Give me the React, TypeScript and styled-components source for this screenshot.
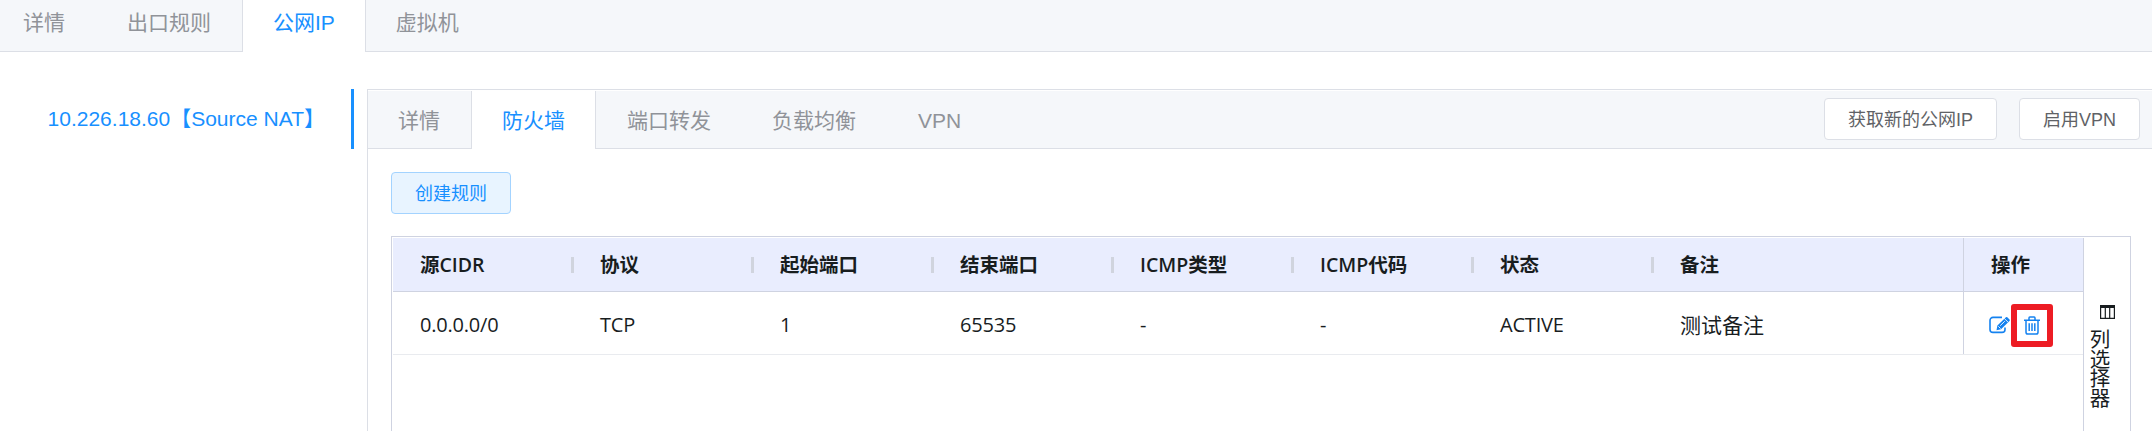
import React from 'react';
import styled, { createGlobalStyle, css } from 'styled-components';

const Global = createGlobalStyle`
  *, *::before, *::after { box-sizing: border-box; }
  body { margin: 0; background: #fff; overflow: hidden; }
`;

const uiFont = '"Liberation Sans", "Noto Sans CJK SC", sans-serif';
const gridFont = '"Open Sans", "Noto Sans", "Noto Sans CJK SC", sans-serif';

const Page = styled.div`
  width: 100%;
  height: 431px;
  overflow: hidden;
  display: flex;
  flex-direction: column;
  font-family: ${uiFont};
`;

const TabBar = styled.div<{ $h: number }>`
  height: ${p => p.$h}px;
  flex: none;
  display: flex;
  align-items: stretch;
  background: #f5f7fa;
  border-bottom: 1px solid #dcdfe6;
`;

const Tab = styled.div<{ $active?: boolean; $left?: number; $raised?: boolean }>`
  display: flex;
  align-items: center;
  font-size: 21px;
  line-height: 30px;
  white-space: nowrap;
  color: #909399;
  padding: ${p => (p.$raised ? '0 30px 6px' : '2px 30px 0')};
  padding-left: ${p => p.$left ?? 30}px;
  border: solid transparent;
  border-width: 0 1px;
  ${p => p.$active && css`
    color: #1890ff;
    background: #fff;
    border-color: #dcdfe6;
    margin-bottom: -1px;
  `}
`;

const Body = styled.div`
  flex: 1;
  display: flex;
  padding-top: 37px;
`;

const Side = styled.div`
  width: 354px;
  height: 60px;
  margin-right: 13px;
  padding: 0 26px 5px 0;
  display: flex;
  align-items: center;
  justify-content: flex-end;
  border-right: 3px solid #1890ff;
  color: #1890ff;
  font-size: 21px;
  white-space: nowrap;
`;

const Card = styled.div`
  flex: 1;
  min-width: 0;
  display: flex;
  flex-direction: column;
  border-left: 1px solid #dcdfe6;
  border-top: 1px solid #dcdfe6;
  padding-top: 1px;
`;

const Actions = styled.div`
  margin-left: auto;
  display: flex;
  gap: 22px;
  padding: 7px 12px 0 0;
`;

const Button = styled.button<{ $primary?: boolean }>`
  height: 42px;
  padding: 1px 23px 0;
  font: 400 18px ${uiFont};
  line-height: 26px;
  border-radius: 4px;
  border: 1px solid ${p => (p.$primary ? '#a3d3ff' : '#dcdfe6')};
  background: ${p => (p.$primary ? '#e8f4ff' : '#fff')};
  color: ${p => (p.$primary ? '#1890ff' : '#606266')};
  white-space: nowrap;
`;

const Content = styled.div`
  flex: 1;
  display: flex;
  flex-direction: column;
  align-items: flex-start;
  padding: 23px 21px 0 23px;
`;

const Grid = styled.div`
  margin-top: 22px;
  flex: 1;
  align-self: stretch;
  display: flex;
  border: 1px solid #cfd3e1;
  border-bottom: 0;
  padding: 1px 0 0 1px;
  font-family: ${gridFont};
  color: #181d1f;
`;

const Table = styled.div`
  flex: 1;
  display: flex;
  flex-direction: column;
`;

const Row = styled.div<{ $head?: boolean }>`
  display: flex;
  height: ${p => (p.$head ? 54 : 63)}px;
  background: ${p => (p.$head ? '#e9edfe' : '#fff')};
  border-bottom: 1px solid ${p => (p.$head ? '#cfd3e1' : '#e9ebef')};
`;

const Cell = styled.div<{ $head?: boolean; $last?: boolean }>`
  width: ${p => (p.$last ? 'auto' : '180px')};
  flex: ${p => (p.$last ? '1' : 'none')};
  display: flex;
  align-items: center;
  padding: ${p => (p.$head ? '1px' : '4px')} 0 0 27px;
  font-size: ${p => (p.$head ? 19.5 : p.$last ? 21 : 20)}px;
  letter-spacing: ${p => (p.$head || p.$last ? 0 : -0.2)}px;
  line-height: 28px;
  font-weight: ${p => (p.$head ? 600 : 400)};
  white-space: nowrap;
`;

const Resize = styled.span`
  width: 3px;
  height: 16px;
  margin: 0 -1px 1px auto;
  background: #d0d4de;
`;

const Pinned = styled.div<{ $head?: boolean }>`
  width: 120px;
  display: flex;
  align-items: center;
  padding: ${p => (p.$head ? '1px 0 0 27px' : '4px 0 0 25px')};
  border-left: 1px solid #cfd3e1;
  font-size: 19.5px;
  line-height: 28px;
  font-weight: 600;
`;

const Highlight = styled.span`
  width: 42px;
  height: 43px;
  margin-left: 1px;
  display: flex;
  align-items: center;
  justify-content: center;
  border: 6px solid #ed1c24;
  border-radius: 3px;
`;

const SideBar = styled.div`
  width: 47px;
  border-left: 1px solid #cfd3e1;
  display: flex;
  flex-direction: column;
  padding-top: 67px;
`;

const SideIcon = styled.svg`
  margin-left: 16px;
`;

const SideLabel = styled.div`
  margin: 10px 0 0 3px;
  width: 24px;
  writing-mode: vertical-rl;
  font-size: 20.5px;
  letter-spacing: -1px;
  line-height: 24px;
  white-space: nowrap;
`;

const EditIcon = () => (
  <svg width="21" height="18" viewBox="0 0 21 18" fill="none" stroke="#1482f0" strokeWidth="1.6">
    <path d="M13 1.400H4A3 3 0 0 0 1 4.400v9a3 3 0 0 0 3 3h9a3 3 0 0 0 3-3v-2" />
    <path d="M7.500 14.200l.9-4.700 8.500-8.200a1 1 0 0 1 1.400 0l2.200 2.200a1 1 0 0 1 0 1.400l-8.500 8.300z" fill="#1482f0" stroke="none" />
    <path d="M9.300 10.300l2.300 2.300M15.300 2.500l3.700 3.600M11.200 9.700l4.600-4.500" stroke="#fff" strokeWidth=".9" />
  </svg>
);

const TrashIcon = () => (
  <svg width="16" height="19" viewBox="0 0 16 19" fill="none" stroke="#1482f0" strokeWidth="1.5">
    <path d="M0 4.200h16M5 4V1.900A.9.9 0 0 1 5.900 1h4.200a.9.9 0 0 1 .9.9V4M2 4.500v11.700a1.800 1.800 0 0 0 1.800 1.800h8.400a1.800 1.800 0 0 0 1.800-1.800V4.500M5.200 7.200v7.800M8 7.200v7.800M10.800 7.200v7.800" />
  </svg>
);

const headers = ['源CIDR', '协议', '起始端口', '结束端口', 'ICMP类型', 'ICMP代码', '状态', '备注'];
const values = ['0.0.0.0/0', 'TCP', '1', '65535', '-', '-', 'ACTIVE', '测试备注'];

export default function App() {
  return (
    <Page>
      <Global />
      <TabBar $h={52}>
        <Tab $left={22} $raised>详情</Tab>
        <Tab $raised>出口规则</Tab>
        <Tab $active $raised>公网IP</Tab>
        <Tab $raised $left={29}>虚拟机</Tab>
      </TabBar>
      <Body>
        <Side>10.226.18.60【Source NAT】</Side>
        <Card>
          <TabBar $h={58}>
            <Tab $left={29}>详情</Tab>
            <Tab $active>防火墙</Tab>
            <Tab>端口转发</Tab>
            <Tab $left={29}>负载均衡</Tab>
            <Tab>VPN</Tab>
            <Actions>
              <Button>获取新的公网IP</Button>
              <Button>启用VPN</Button>
            </Actions>
          </TabBar>
          <Content>
            <Button $primary>创建规则</Button>
            <Grid>
              <Table>
                <Row $head>
                  {headers.map((h, i) => (
                    <Cell key={h} $head $last={i === 7}>
                      {h}
                      {i < 7 && <Resize />}
                    </Cell>
                  ))}
                  <Pinned $head>操作</Pinned>
                </Row>
                <Row>
                  {values.map((v, i) => (
                    <Cell key={i} $last={i === 7}>{v}</Cell>
                  ))}
                  <Pinned>
                    <EditIcon />
                    <Highlight><TrashIcon /></Highlight>
                  </Pinned>
                </Row>
              </Table>
              <SideBar>
                <SideIcon width="15" height="14" viewBox="0 0 15 14" fill="none" stroke="#181d1f">
                  <path d="M0 1.500h15" strokeWidth="3" />
                  <path d="M.6 0v13.300h13.800V0M5.300 2v11M9.700 2v11" strokeWidth="1.200" />
                </SideIcon>
                <SideLabel>列选择器</SideLabel>
              </SideBar>
            </Grid>
          </Content>
        </Card>
      </Body>
    </Page>
  );
}
